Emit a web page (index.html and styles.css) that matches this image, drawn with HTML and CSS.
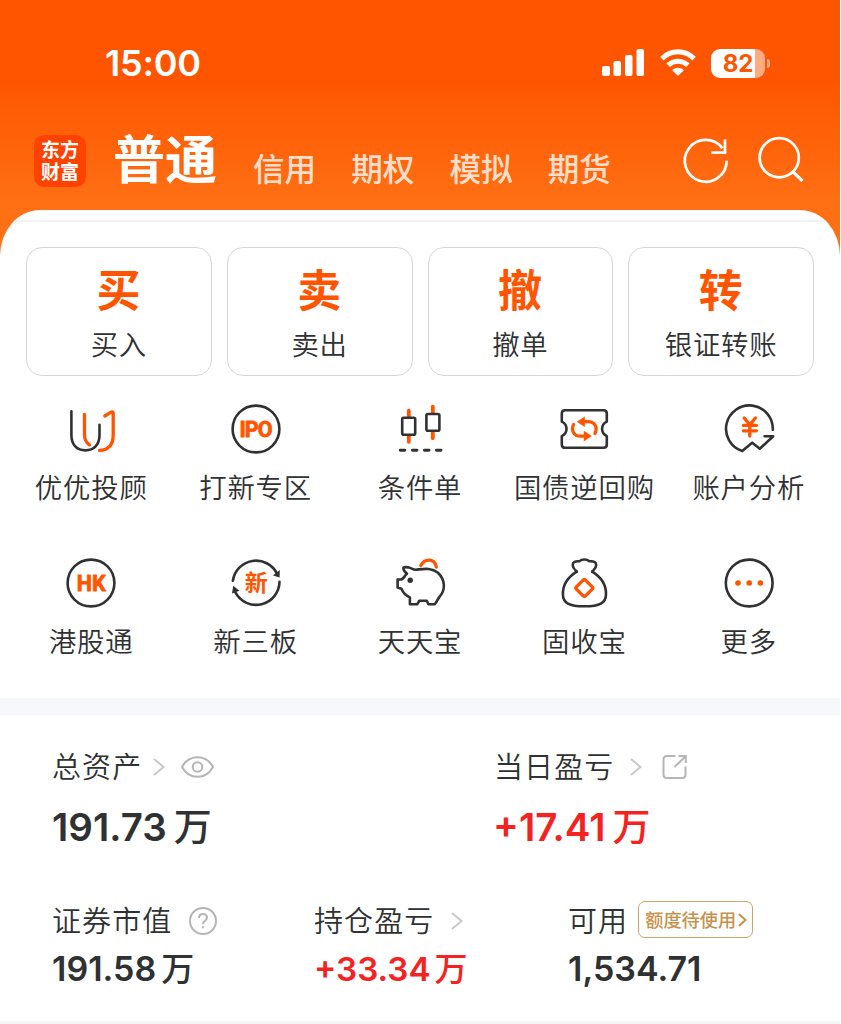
FILE: index.html
```
<!DOCTYPE html>
<html lang="zh-CN">
<head>
    <meta charset="utf-8">
    <title>普通交易</title>
    <link rel="stylesheet" href="styles.css">
</head>

<body>
<div class="app">

    <header class="top">
        <!-- phone status bar -->
        <div class="status">
            <span class="time">15:00</span>
            <div class="status-icons">
                <svg class="signal" width="42" height="28" viewBox="0 0 42 28" fill="#fff">
                    <rect x="0" y="17" width="8" height="10" rx="2"/>
                    <rect x="11.5" y="12" width="7.5" height="15" rx="2"/>
                    <rect x="23" y="6" width="7.5" height="21" rx="2"/>
                    <rect x="34.5" y="0" width="7.5" height="27" rx="2"/>
                </svg>
                <svg class="wifi" width="36" height="28" viewBox="0 0 36 28" fill="none" stroke="#fff" stroke-width="5">
                    <path d="M1.9 9.6C11.3 .6 24.7 .6 34.1 9.6"/>
                    <path d="M8.1 16.2C13.9 10.8 22.1 10.8 27.9 16.2"/>
                    <path d="M12.2 21.2C15.6 18 20.4 18 23.8 21.2L18 27Z" fill="#fff" stroke="none"/>
                </svg>
                <div class="battery"><span class="battery-body">82</span><span class="battery-tip"></span></div>
            </div>
        </div>

        <!-- account type tabs -->
        <nav class="tabs">
            <div class="logo"><span>东方</span><span>财富</span></div>
            <a class="tab active">普通</a>
            <a class="tab">信用</a>
            <a class="tab">期权</a>
            <a class="tab">模拟</a>
            <a class="tab">期货</a>
            <svg class="refresh" width="50" height="50" viewBox="0 0 50 50" fill="none" stroke="#fff" stroke-width="2.7">
                <path d="M45.6 24.7A20.9 20.9 0 1 1 41.5 12.4"/>
                <path d="M44 3.5V16.7H30.5"/>
            </svg>
            <svg class="search" width="50" height="50" viewBox="0 0 50 50" fill="none" stroke="#fff" stroke-width="2.7">
                <circle cx="23.2" cy="21.7" r="19.6"/>
                <path d="M36.7 35.7L46.4 44.9" stroke-width="3.2"/>
            </svg>
        </nav>
    </header>

    <main class="panel">
        <div class="actions">
            <a class="action"><b>买</b><span>买入</span></a>
            <a class="action"><b>卖</b><span>卖出</span></a>
            <a class="action"><b>撤</b><span>撤单</span></a>
            <a class="action"><b>转</b><span>银证转账</span></a>
        </div>

        <div class="menu">
            <a class="item">
                <svg class="icon" viewBox="0 0 50 50">
                    <path class="dark" d="M5.4 7.2V31C5.4 41 11 46.4 19.4 46.4S33.5 41 33.5 31V20.7"/>
                    <path class="hot" d="M18.5 10.3V31C18.5 36 20.3 38.5 23.5 41"/>
                    <path class="hot" d="M38.8 12L45 8.2Q47.2 7 47.2 9.5V31C47.2 40.5 42.5 46 33.5 46.4"/>
                </svg>
                <span>优优投顾</span>
            </a>
            <a class="item">
                <svg class="icon" viewBox="0 0 50 50">
                    <circle class="dark" cx="25" cy="25" r="23.4"/>
                    <text class="mark" x="25" y="32.5" textLength="33">IPO</text>
                </svg>
                <span>打新专区</span>
            </a>
            <a class="item">
                <svg class="icon" viewBox="0 0 50 50">
                    <path class="hot wick" d="M13.8 6.7V12M13.8 32V37.8M37.8 2.7V9M37.8 28V34.2"/>
                    <rect class="dark" x="7.2" y="13.8" width="13" height="17" rx="1.5"/>
                    <rect class="dark" x="31.4" y="10" width="13" height="16.8" rx="1.5"/>
                    <path class="dark dash" d="M5.2 46.3H9.8M17.4 46.3H22M29.4 46.3H34M41.4 46.3H46"/>
                </svg>
                <span>条件单</span>
            </a>
            <a class="item">
                <svg class="icon" viewBox="0 0 50 50">
                    <path class="dark" d="M6 6.2H44.6Q47.8 6.2 47.8 9.4V17.6C41.5 20.6 41.5 29 47.8 32.2V40.6Q47.8 43.8 44.6 43.8H6Q2.8 43.8 2.8 40.6V32.2C9.1 29 9.1 20.6 2.8 17.6V9.4Q2.8 6.2 6 6.2Z"/>
                    <path class="hot" d="M36 29.4C38.8 23.5 36 17.6 29 17.6H24"/>
                    <path class="hot-fill" d="M17.8 17.7L25.8 12.4V23Z"/>
                    <g transform="rotate(180 25.3 24.9)">
                        <path class="hot" d="M36 29.4C38.8 23.5 36 17.6 29 17.6H24"/>
                        <path class="hot-fill" d="M17.8 17.7L25.8 12.4V23Z"/>
                    </g>
                </svg>
                <span>国债逆回购</span>
            </a>
            <a class="item">
                <svg class="icon" viewBox="0 0 50 50">
                    <path class="dark" d="M48.8 25.6A23.4 23.4 0 1 0 18.2 47.1L28.2 38.7L35.8 44.7L49.2 32.3H40.6"/>
                    <path class="hot yen" d="M20.2 14L25.8 20.8L31.4 14M25.8 21V32M19.4 21.4H32.4M19.4 26.8H32.4"/>
                </svg>
                <span>账户分析</span>
            </a>
            <a class="item">
                <svg class="icon" viewBox="0 0 50 50">
                    <circle class="dark" cx="25" cy="25" r="23.4"/>
                    <text class="mark" x="25.2" y="32.6">HK</text>
                </svg>
                <span>港股通</span>
            </a>
            <a class="item">
                <svg class="icon" viewBox="0 0 50 50">
                    <path class="dark" d="M1.9 22.8A23.4 23.4 0 0 1 46 15.6"/>
                    <path class="dark-fill" d="M42 17.4L48.8 12L48.6 19.6Z"/>
                    <path class="dark" d="M48.5 23.8A23.4 23.4 0 0 1 4.4 34.4"/>
                    <path class="dark-fill" d="M1 35.5L2.2 27.8L8.4 32.8Z"/>
                    <text class="mark cn" x="25.2" y="33">新</text>
                </svg>
                <span>新三板</span>
            </a>
            <a class="item">
                <svg class="icon" viewBox="0 0 50 50">
                    <path class="dark" d="M13.8 9.5C11.8 9.2 9.8 8.6 8.4 9.8C8.2 12.5 10 14.2 12 15.8C9.8 17.4 8.8 20.8 6.2 21.5H2.6V29.6L6.4 30.8C8 34.6 11 37.8 14.9 39.4V46.2H22.3L24.2 42.8H31.8L33.4 46.2H39.8C42 43.8 42.6 40.8 44.8 38.5C50.6 32 50.4 22 43 14.8C36 9.2 28.5 11 20.8 11.7C18 11.8 16.4 9.9 13.8 9.5Z"/>
                    <path class="hot" d="M25.8 7.6C29.8-.2 39.8 .3 41.3 9"/>
                    <circle class="dark-fill" cx="15.2" cy="22.3" r="2.7"/>
                </svg>
                <span>天天宝</span>
            </a>
            <a class="item">
                <svg class="icon" viewBox="0 0 50 50">
                    <path class="dark" d="M17.8 13.7C15.8 11.7 13.8 10.2 13.7 7.2C13.6 3.8 16.5 2.8 20.3 3.3C22.8 .8 28 .8 30.4 3.3C34.4 2.8 37.3 3.8 37.2 7.2C37.1 10.2 35 11.7 33.2 13.7"/>
                    <path class="dark" d="M17.8 13.7C10 18.5 3.6 26.5 3.9 36.5C4 45 10 48.3 25.4 48.3S46.9 45 47 36.5C47.3 26.5 41 18.5 33.2 13.7"/>
                    <rect class="hot" x="18.9" y="23.6" width="12.8" height="12.8" rx="1.6" transform="rotate(45 25.3 30)"/>
                </svg>
                <span>固收宝</span>
            </a>
            <a class="item">
                <svg class="icon" viewBox="0 0 50 50">
                    <circle class="dark" cx="25.2" cy="25" r="23.4"/>
                    <g class="hot-fill">
                        <circle cx="14" cy="25" r="2.8"/>
                        <circle cx="25.2" cy="25" r="2.8"/>
                        <circle cx="36.4" cy="25" r="2.8"/>
                    </g>
                </svg>
                <span>更多</span>
            </a>
        </div>
    </main>

    <!-- assets -->
    <section class="assets">
        <div class="row total">
            <div class="cell">
                <div class="label">总资产
                    <svg class="arrow" width="12" height="18" viewBox="0 0 12 18"><path d="M1 1L10.5 9L1 17"/></svg>
                    <svg class="eye" width="33" height="22" viewBox="0 0 33 22"><path d="M1 11C8-2 25-2 32 11C25 24 8 24 1 11Z"/><circle cx="16.5" cy="11" r="4.8"/></svg>
                </div>
                <div class="value">191.73<i>万</i></div>
            </div>
            <div class="cell">
                <div class="label">当日盈亏
                    <svg class="arrow wide" width="12" height="18" viewBox="0 0 12 18"><path d="M1 1L10.5 9L1 17"/></svg>
                    <svg class="share" width="26" height="26" viewBox="0 0 26 26"><path d="M13.5 2H5Q1.5 2 1.5 5.5V20.5Q1.5 24 5 24H20Q23.5 24 23.5 20.5V12.5M16.5 2H23.8V9M23.8 2L12.5 13"/></svg>
                </div>
                <div class="value up">+17.41<i>万</i></div>
            </div>
        </div>
        <div class="row detail">
            <div class="cell">
                <div class="label">证券市值
                    <svg class="help" width="28" height="28" viewBox="0 0 28 28"><circle cx="14" cy="14" r="13"/><path d="M10 11C10 5.6 18 5.6 18 10.7C18 13.6 14 13.6 14 17.2M14 19.3V21.3"/></svg>
                </div>
                <div class="value">191.58<i>万</i></div>
            </div>
            <div class="cell">
                <div class="label">持仓盈亏
                    <svg class="arrow wide" width="12" height="18" viewBox="0 0 12 18"><path d="M1 1L10.5 9L1 17"/></svg>
                </div>
                <div class="value up">+33.34<i>万</i></div>
            </div>
            <div class="cell">
                <div class="label">可用
                    <span class="quota">额度待使用<svg width="9" height="14" viewBox="0 0 9 14"><path d="M1 1L7.5 7L1 13"/></svg></span>
                </div>
                <div class="value">1,534.71</div>
            </div>
        </div>
    </section>

</div>
</body>
</html>
```
FILE: styles.css
```
* {
    box-sizing: border-box;
}

body {
    margin: 0;
    background: #fff;
    color: #303133;
    font-family: "Noto Sans CJK SC", sans-serif;
}

.app {
    width: 840px;
    height: 1024px;
    overflow: hidden;
    background: #fff;
}

/* orange header, runs on behind the rounded panel corners */
.top {
    height: 260px;
    background: linear-gradient(#ff5500 0, #ff5500 80px, #ff7014 205px);
}

.status {
    display: flex;
    justify-content: space-between;
    align-items: center;
    height: 126px;
    padding: 0 70px 0 105px;
}

.time {
    color: #fff;
    font: 600 36px/40px Inter, sans-serif;
    letter-spacing: -0.2px;
}

.status-icons {
    display: flex;
    align-items: center;
}

.wifi {
    margin-left: 16px;
}

.battery {
    display: flex;
    align-items: center;
    margin-left: 15px;
}

.battery-body {
    width: 54px;
    height: 29px;
    border-radius: 9px;
    background: linear-gradient(90deg, #fff 82%, #ffaa80 82%);
    color: #ff5500;
    font: 700 24px/29px Inter, sans-serif;
    text-align: center;
}

.battery-tip {
    width: 3px;
    height: 9px;
    margin-left: 2px;
    border-radius: 0 4px 4px 0;
    background: #ffaa80;
}

.tabs {
    display: flex;
    align-items: center;
    height: 70px;
    padding-left: 34px;
}

.logo {
    display: flex;
    flex-direction: column;
    align-items: center;
    width: 52px;
    height: 52px;
    padding-top: 3px;
    border-radius: 10px;
    background: #ff4200;
    color: #fff;
    font-size: 19px;
    line-height: 22px;
    font-weight: 700;
}

.tab {
    margin-right: 35px;
    padding-top: 12px;
    color: rgba(255, 255, 255, 0.8);
    font-size: 31.6px;
    line-height: 40px;
    font-weight: 500;
}

.tab.active {
    margin: 0 36px 0 27px;
    padding: 0 0 9px;
    color: #fff;
    font-size: 52px;
    line-height: 60px;
    font-weight: 700;
}

.refresh {
    margin-left: 35px;
}

.search {
    margin-left: 25px;
}

.panel {
    height: 488px;
    margin-top: -50px;
    padding-top: 10px;
    border-radius: 40px 40px 0 0 / 46px 46px 0 0;
    background: #fff;
    overflow: hidden;
}

.actions {
    display: grid;
    grid-template-columns: repeat(4, 1fr);
    gap: 15px;
    padding: 25px 26px 0;
    border-top: 2px solid #f3f3f3;
}

.action {
    display: flex;
    flex-direction: column;
    align-items: center;
    height: 129px;
    padding-top: 13px;
    border: 1px solid #d6d6d6;
    border-radius: 16px;
}

.action b {
    padding-right: 1px;
    color: #ff5500;
    font-size: 44px;
    line-height: 54px;
    font-weight: 700;
}

.action span,
.item span {
    font-size: 27.4px;
    line-height: 40px;
    font-weight: 350;
    letter-spacing: 0.8px;
    white-space: nowrap;
}

.action span {
    margin-top: 8px;
}

/* shortcut grid */
.menu {
    display: grid;
    grid-template-columns: repeat(5, 1fr);
    grid-auto-rows: 154px;
    padding: 28px 9px 0;
}

.item {
    display: flex;
    flex-direction: column;
    align-items: center;
}

.item span {
    margin-top: 12px;
}

.icon {
    width: 50px;
    height: 50px;
    overflow: visible;
}

.dark,
.hot {
    fill: none;
    stroke: #303133;
    stroke-width: 2.6;
    stroke-linecap: round;
    stroke-linejoin: round;
}

.hot {
    stroke: #ff5500;
    stroke-width: 3.3;
}

.wick {
    stroke-width: 3.8;
}

.dash {
    stroke-width: 2.9;
}

.dark-fill {
    fill: #303133;
}

.hot-fill {
    fill: #ff5500;
}

.mark {
    fill: #ff5500;
    stroke: #ff5500;
    stroke-width: 0.8;
    stroke-linejoin: round;
    font: 700 21.5px Roboto, sans-serif;
    text-anchor: middle;
}

.mark.cn {
    stroke: none;
    font: 700 23px "Noto Sans CJK SC", sans-serif;
}

/* account figures */
.assets {
    height: 326px;
    padding: 28px 0 0 52px;
    border-top: 17px solid #f6f8fb;
    border-bottom: 3px solid #f7f7f7;
}

.row {
    display: grid;
}

.total {
    grid-template-columns: 442px 1fr;
    height: 154px;
}

.detail {
    grid-template-columns: 262px 254px 1fr;
}

.label {
    display: flex;
    align-items: center;
    height: 44px;
    font-size: 29px;
    font-weight: 350;
    letter-spacing: 1.1px;
}

.label svg {
    margin-top: 3px;
    fill: none;
    stroke: #b5b5b5;
    stroke-width: 2;
}

.label .arrow {
    margin-left: 11px;
    stroke: #c8c8c8;
}

.label .arrow.wide {
    margin-left: 16px;
}

.label .eye {
    margin-left: 16px;
}

.label .share {
    margin-left: 20px;
}

.label .help {
    margin-left: 17px;
}

.detail .label .arrow.wide {
    margin-left: 17px;
}

.value {
    display: flex;
    align-items: center;
    height: 50px;
    margin-top: 15px;
    font: 600 38.5px/50px Inter, sans-serif;
}

.value i {
    margin-left: 7px;
    padding-bottom: 6px;
    font: 500 38px/50px "Noto Sans CJK SC", sans-serif;
}

.value.up {
    margin-left: -1px;
}

.detail .value {
    margin-top: 3px;
    font-size: 34px;
}

.detail .value.up {
    margin-left: 0;
    font-size: 33.2px;
}

.detail .value i {
    margin-left: 5px;
    padding-bottom: 4px;
    font-size: 33px;
}

.detail .value.up i {
    margin-left: 4px;
}

.up {
    color: #f52222;
}

.quota {
    display: flex;
    align-items: center;
    height: 37px;
    margin-top: 1px;
    margin-left: 10px;
    padding: 0 5px 1px 6px;
    border: 1px solid #d0a468;
    border-radius: 7px;
    color: #c8914b;
    font-size: 18.2px;
    font-weight: 500;
    letter-spacing: 0;
}

.label .quota svg {
    margin: 1px 0 0 2px;
    stroke: #c8914b;
}
```
